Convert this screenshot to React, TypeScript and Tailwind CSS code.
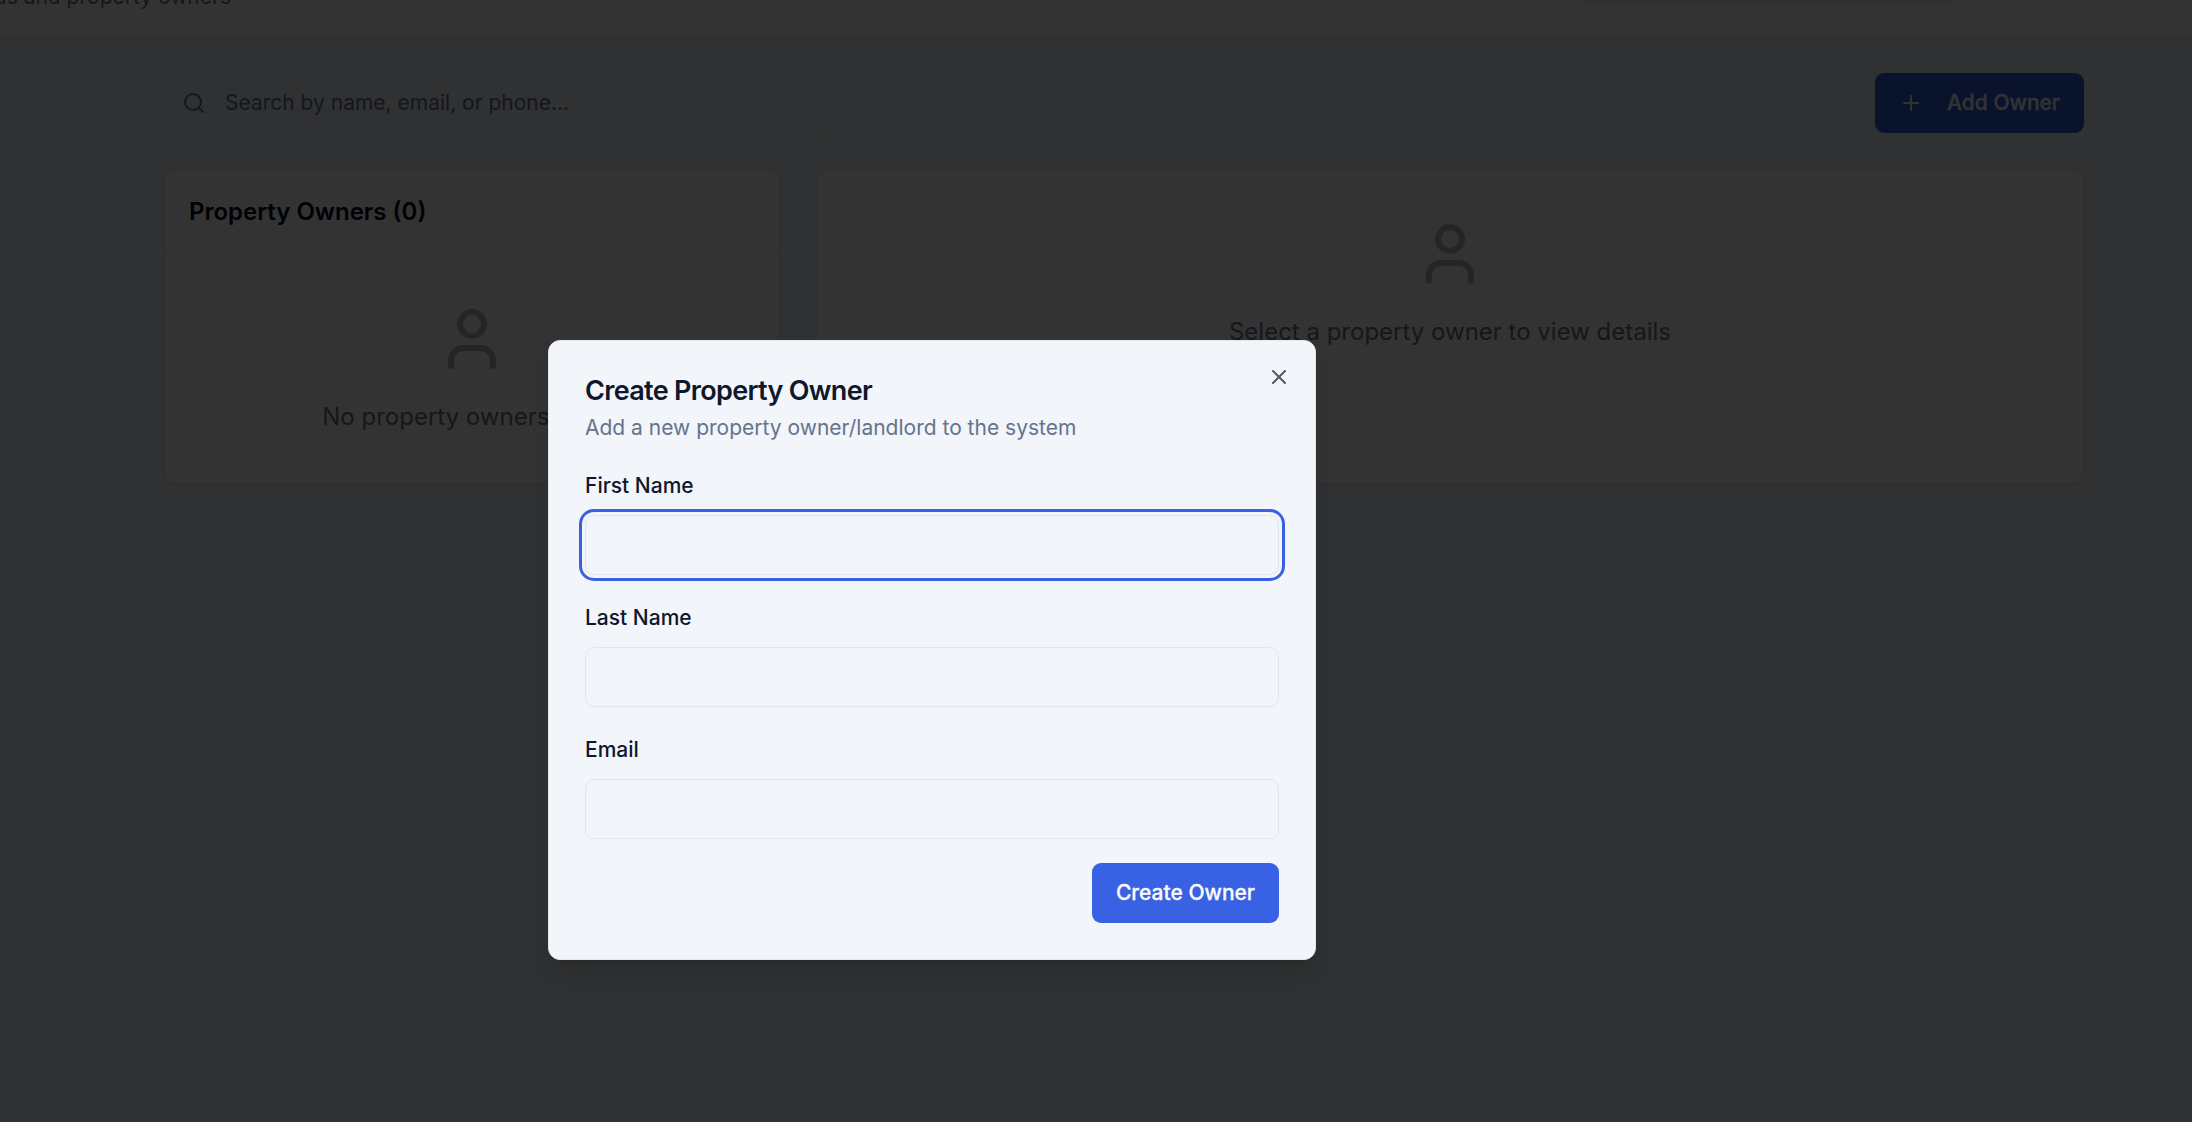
import type { ReactNode } from "react";
import { Plus, Search, User, X } from "lucide-react";

function EmptyState({ children }: { children: ReactNode }) {
  return (
    <div className="flex flex-col items-center p-12 text-2xl leading-9 text-[#64748b]">
      <User className="mb-6 size-[72px] opacity-50" />
      <p className="whitespace-nowrap">{children}</p>
    </div>
  );
}

function Field({ label, focused = false }: { label: string; focused?: boolean }) {
  return (
    <div>
      <label className="block pt-px text-[21px] leading-9 font-medium text-[#0f172a]">{label}</label>
      <input
        className={
          "mt-[11px] block h-[60px] w-full rounded-[9px] border border-[#e2e6ee] bg-[#f2f5fa] px-[18px] text-[21px] outline-none" +
          (focused ? " ring-3 ring-[#3862e3] ring-offset-3 ring-offset-[#f2f5fa]" : "")
        }
      />
    </div>
  );
}

function Dialog() {
  return (
    <div
      role="dialog"
      className="absolute top-[340px] left-[548px] flex w-[768px] flex-col gap-6 rounded-xl border border-[#e2e8f0] bg-[#f2f5fa] p-9 shadow-[0_15px_22px_-4px_rgba(0,0,0,0.1),0_6px_9px_-6px_rgba(0,0,0,0.1)]"
    >
      <div className="flex flex-col gap-[9px]">
        <h2 className="text-[27px] leading-none font-semibold tracking-tight text-[#0f172a]">
          Create Property Owner
        </h2>
        <p className="text-[21px] leading-[30px] text-[#64748b]">
          Add a new property owner/landlord to the system
        </p>
      </div>
      <form className="flex flex-col gap-6">
        <Field label="First Name" focused />
        <Field label="Last Name" />
        <Field label="Email" />
        <div className="flex justify-end">
          <button
            type="button"
            className="h-[60px] rounded-[9px] bg-[#3862e3] px-6 text-[21px] font-medium text-[#f8fafc] [-webkit-text-stroke:0.3px_#f8fafc]"
          >
            Create Owner
          </button>
        </div>
      </form>
      <button type="button" aria-label="Close" className="absolute top-6 right-6 text-[#0f172a] opacity-70">
        <X className="size-6" />
      </button>
    </div>
  );
}

export default function App() {
  return (
    <div className="relative h-[1122px] w-[2192px] overflow-hidden bg-[#f1f5f9] font-['Inter',sans-serif] text-[#020817]">
      <header className="flex h-[37px] items-start overflow-hidden border-b border-[#e2e8f0] bg-white">
        <p className="-mt-[18px] flex w-[231px] justify-end text-[21px] leading-[30px] whitespace-nowrap text-[#64748b]">
          Manage landlords and property owners
        </p>
        <div className="-mt-[57px] ml-[1348px] h-[60px] w-[380px] rounded-[9px] border border-[#e2e8f0] bg-[#f1f5f9]" />
      </header>

      <main className="mr-[108px] ml-[164px] flex flex-col gap-9 pt-9">
        <div className="flex items-center justify-between">
          <div className="flex h-[60px] w-[672px] items-center gap-[19px] rounded-[9px] border border-[#e2e8f0] bg-[#f1f5f9] px-[17px] text-[#64748b]">
            <Search className="size-6" />
            <span className="text-[21px]">Search by name, email, or phone...</span>
          </div>
          <button
            type="button"
            className="flex h-[60px] items-center gap-6 rounded-[9px] bg-[#3162dc] px-6 text-[21px] font-medium text-[#f8fafc] [-webkit-text-stroke:0.3px_#f8fafc]"
          >
            <Plus className="size-6" />
            Add Owner
          </button>
        </div>

        <div className="grid grid-cols-3 gap-9">
          <section className="rounded-xl border border-[#e2e8f0] bg-white shadow-[0_1.5px_3px_rgba(0,0,0,0.05)]">
            <h3 className="border-b border-[#e2e8f0] p-6 text-2xl leading-9 font-semibold">
              Property Owners (0)
            </h3>
            <EmptyState>No property owners found</EmptyState>
          </section>
          <section className="col-span-2 rounded-xl border border-[#e2e8f0] bg-white shadow-[0_1.5px_3px_rgba(0,0,0,0.05)]">
            <EmptyState>Select a property owner to view details</EmptyState>
          </section>
        </div>
      </main>

      <div className="absolute inset-0 bg-black/80" />
      <Dialog />
    </div>
  );
}
